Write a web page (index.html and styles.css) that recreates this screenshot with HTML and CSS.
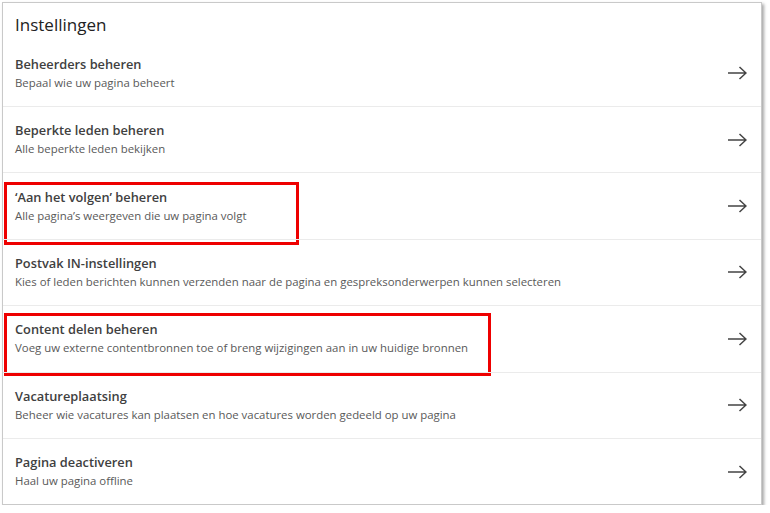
FILE: index.html
```html
<!DOCTYPE html>
<html lang="nl">

<head>
    <meta charset="UTF-8">
    <meta name="viewport" content="width=device-width, initial-scale=1.0">
    <title>Instellingen</title>
    <link rel="stylesheet" href="styles.css">
</head>

<body>
    <div class="card">
        <div class="head">Instellingen</div>
        <div class="list">
            <div class="row">
                <div class="text">
                    <span class="title">Beheerders beheren</span>
                    <span class="desc">Bepaal wie uw pagina beheert</span>
                </div>
                <svg class="arrow" viewBox="0 0 20 14"><path d="M1 7H19M12.5 1L19 7L12.5 13" /></svg>
            </div>
            <div class="row">
                <div class="text">
                    <span class="title">Beperkte leden beheren</span>
                    <span class="desc">Alle beperkte leden bekijken</span>
                </div>
                <svg class="arrow" viewBox="0 0 20 14"><path d="M1 7H19M12.5 1L19 7L12.5 13" /></svg>
            </div>
            <div class="row">
                <div class="text">
                    <span class="title">‘Aan het volgen’ beheren</span>
                    <span class="desc">Alle pagina’s weergeven die uw pagina volgt</span>
                </div>
                <svg class="arrow" viewBox="0 0 20 14"><path d="M1 7H19M12.5 1L19 7L12.5 13" /></svg>
                <i class="mark mark-one"></i>
            </div>
            <div class="row">
                <div class="text">
                    <span class="title">Postvak IN-instellingen</span>
                    <span class="desc">Kies of leden berichten kunnen verzenden naar de pagina en gespreksonderwerpen kunnen selecteren</span>
                </div>
                <svg class="arrow" viewBox="0 0 20 14"><path d="M1 7H19M12.5 1L19 7L12.5 13" /></svg>
            </div>
            <div class="row">
                <div class="text">
                    <span class="title">Content delen beheren</span>
                    <span class="desc">Voeg uw externe contentbronnen toe of breng wijzigingen aan in uw huidige bronnen</span>
                </div>
                <svg class="arrow" viewBox="0 0 20 14"><path d="M1 7H19M12.5 1L19 7L12.5 13" /></svg>
                <i class="mark mark-two"></i>
            </div>
            <div class="row">
                <div class="text">
                    <span class="title">Vacatureplaatsing</span>
                    <span class="desc">Beheer wie vacatures kan plaatsen en hoe vacatures worden gedeeld op uw pagina</span>
                </div>
                <svg class="arrow" viewBox="0 0 20 14"><path d="M1 7H19M12.5 1L19 7L12.5 13" /></svg>
            </div>
            <div class="row">
                <div class="text">
                    <span class="title">Pagina deactiveren</span>
                    <span class="desc">Haal uw pagina offline</span>
                </div>
                <svg class="arrow" viewBox="0 0 20 14"><path d="M1 7H19M12.5 1L19 7L12.5 13" /></svg>
            </div>
        </div>
    </div>
</body>

</html>
```

FILE: styles.css
```css
body {
    margin: 0;
    background-color: #fff;
    font-family: "Open Sans", "Noto Sans", sans-serif;
}

.card {
    width: 758px;
    margin: 2px 0 0 2px;
    border: 1px solid #c9c9c9;
    background-color: #fff;
    box-shadow: 2px 2px 3px 0 rgba(0, 0, 0, 0.35);
}

.head {
    height: 37px;
    padding: 10px 0 0 12px;
    box-sizing: border-box;
    font-size: 17px;
    color: #222;
}

.row {
    height: 66.4px;
    box-sizing: border-box;
    border-top: 1px solid #ebebeb;
    padding: 0 14px 0 12px;
    display: flex;
    align-items: center;
    justify-content: space-between;
    position: relative;
}

.row:first-child {
    border-top: none;
    height: 66px;
}

.text {
    display: flex;
    flex-direction: column;
    gap: 2px;
    padding-bottom: 2px;
}

.title {
    font-size: 12.8px;
    font-weight: 600;
    color: #404040;
}

.desc {
    font-size: 11.4px;
    color: #595959;
}

.arrow {
    width: 20px;
    height: 14px;
    fill: none;
    stroke: #444;
    stroke-width: 1.5;
}

.mark {
    position: absolute;
    left: 1px;
    border: 3px solid #ee0000;
    box-sizing: border-box;
}

.mark-one {
    top: 9px;
    width: 295px;
    height: 63px;
}

.mark-two {
    top: 7px;
    width: 487px;
    height: 63px;
}
```
